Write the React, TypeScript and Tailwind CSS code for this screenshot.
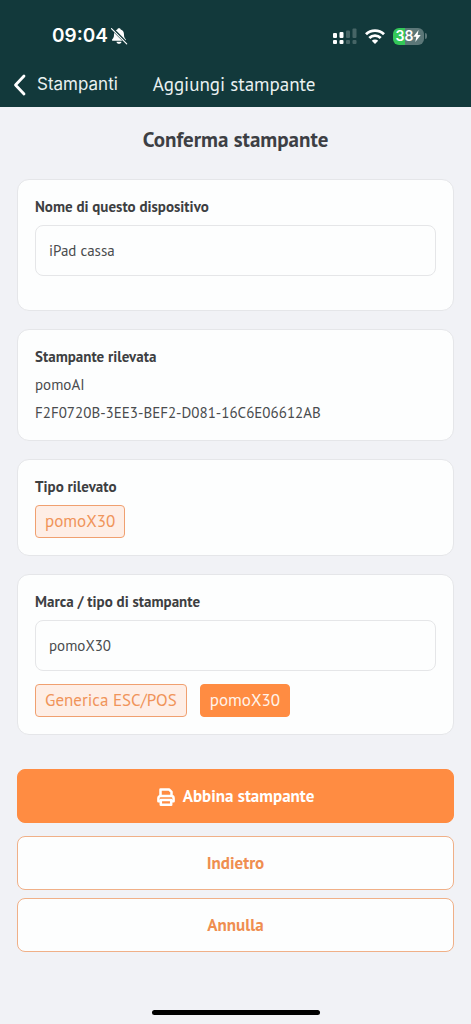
import { useState, type ReactNode } from "react";

function BellOff() {
  return (
    <svg viewBox="0 0 18 18" className="h-[18px] w-[18px]" aria-hidden="true">
      <path
        d="M9 1.2c.9 0 1.5.5 1.7 1.3 2.2.7 3.3 2.500 3.300 4.900 0 2.500.6 3.600 1.500 4.500.4.4.5.7.5 1 0 .6-.4.9-1.100.9H3.100c-.7 0-1.100-.3-1.100-.9 0-.3.100-.6.500-1C3.400 11 4 9.900 4 7.400 4 5 5.100 3.200 7.300 2.500 7.500 1.700 8.100 1.200 9 1.200Z"
        fill="#fff"
      />
      <path d="M6.500 14.700h5c-.2 1.300-1.200 2.100-2.500 2.100s-2.300-.8-2.500-2.100Z" fill="#fff" />
      <path d="M2 1.500 17 16.500" stroke="#12393b" strokeWidth="3" />
      <path d="M1.500 1.700 16.700 16.900" stroke="#fff" strokeWidth="1.200" strokeLinecap="round" />
    </svg>
  );
}

function Signal() {
  return (
    <svg viewBox="0 0 24 17" className="h-[17px] w-6" aria-hidden="true">
      <g fill="#fff">
        <rect x="0" y="5" width="4" height="5" rx="1" />
        <rect x="0" y="12" width="4" height="4" rx="1" />
        <rect x="6.500" y="4" width="4" height="6" rx="1" />
        <rect x="6.500" y="12" width="4" height="4" rx="1" />
      </g>
      <g fill="#fff" opacity="0.22">
        <rect x="13" y="2.500" width="4" height="7.500" rx="1" />
        <rect x="13" y="12" width="4" height="4" rx="1" />
        <rect x="19.500" y="0.500" width="4" height="9.500" rx="1" />
        <rect x="19.500" y="12" width="4" height="4" rx="1" />
      </g>
    </svg>
  );
}

function Wifi() {
  return (
    <svg viewBox="0 0 20 15" className="h-[15px] w-5" aria-hidden="true">
      <g fill="none" stroke="#fff" strokeWidth="2.800">
        <path d="M1 5.300a12.800 12.800 0 0 1 18 0" />
        <path d="M4.300 8.900a8.100 8.100 0 0 1 11.400 0" />
      </g>
      <path d="M10 14.900 6.800 11.700a4.600 4.600 0 0 1 6.400 0Z" fill="#fff" />
    </svg>
  );
}

function Battery() {
  return (
    <div className="flex items-center gap-px">
      <div className="flex h-[17px] w-[31px] items-center justify-center rounded-md bg-linear-to-r from-[#34c759] from-38% to-[#5c7778] to-38% text-sm font-semibold text-white">
        <span>38</span>
        <svg viewBox="0 0 8 12" className="h-3 w-2" aria-hidden="true">
          <path d="M5.600 0 .3 6.800h3L2.300 12l5.400-7H4.600Z" fill="#fff" />
        </svg>
      </div>
      <div className="h-1.5 w-0.5 rounded-r-full bg-[#5c7778]" />
    </div>
  );
}

function Printer() {
  return (
    <svg viewBox="0 0 18 18" className="h-[18px] w-[18px]" aria-hidden="true">
      <g fill="none" stroke="#fff" strokeWidth="2.500" strokeLinejoin="round">
        <path d="M3.500 8V1.400h8.500l2.500 2.500V8" />
        <path d="M4 13.200H1.400V10.200A2.200 2.200 0 0 1 3.600 8h10.800a2.200 2.200 0 0 1 2.200 2.200v3H14" />
        <path d="M3.800 12h10.400v4.700H3.800Z" />
      </g>
    </svg>
  );
}

function Card({ children }: { children: ReactNode }) {
  return (
    <section className="rounded-xl border border-[#e5e6e9] bg-[#fdfefe] px-[17px] pt-[13px] pb-[17px]">
      {children}
    </section>
  );
}

const heading = "block text-[15px] leading-7 font-bold text-[#3d3f42]";
const field =
  "mt-1 block h-[51px] w-full rounded-lg border border-[#e5e6e8] bg-[#fdfefe] px-[13px] text-[15px] text-[#4a4c4e] outline-none";
const chip = "flex items-center rounded border px-[9px] h-[33px] text-[17px]";
const chipSoft = "border-[#f0a070] bg-[#feeee6] text-[#f0945a]";
const chipSolid = "border-[#ff8c42] bg-[#ff8c42] text-[#fff3ea]";
const action =
  "flex h-[54px] w-full items-center justify-center gap-2 rounded-lg border pt-0.5 text-[17px] font-bold";

export default function App() {
  const [device, setDevice] = useState("iPad cassa");
  const [brand, setBrand] = useState("pomoX30");

  return (
    <div className="flex min-h-screen flex-col bg-[#f1f2f6] font-['PT_Sans','Noto_Sans',sans-serif]">
      <header className="bg-[#12393b] text-white">
        <div className="flex h-[60px] items-end justify-between pr-11 pb-3 pl-[52px] font-['Inter',sans-serif]">
          <div className="flex items-center gap-0.5">
            <span className="text-[19px] leading-6 font-semibold">09:04</span>
            <BellOff />
          </div>
          <div className="flex h-6 items-center gap-2">
            <Signal />
            <Wifi />
            <Battery />
          </div>
        </div>
        <nav className="flex h-[47px] items-center pt-0.5 pl-[13px] text-[#e9f1f1]">
          <a href="#stampanti" className="flex items-center gap-[11px] font-['Inter',sans-serif] text-[17px]">
            <svg viewBox="0 0 13 22" className="h-[22px] w-[13px]" aria-hidden="true">
              <path
                d="M11 2 2.500 11l8.500 9"
                fill="none"
                stroke="#fff"
                strokeWidth="2.800"
                strokeLinecap="round"
                strokeLinejoin="round"
              />
            </svg>
            Stampanti
          </a>
          <span className="ml-[35px] text-[19px]">Aggiungi stampante</span>
        </nav>
      </header>

      <main className="flex grow flex-col px-[17px] pt-[19px]">
        <h1 className="text-center text-[21px] leading-7 font-bold text-[#3d3f44]">Conferma stampante</h1>

        <div className="mt-[25px] flex flex-col gap-[18px]">
          <Card>
            <label htmlFor="device" className={heading}>
              Nome di questo dispositivo
            </label>
            <input
              id="device"
              className={`${field} mb-[17px]`}
              value={device}
              onChange={(e) => setDevice(e.target.value)}
            />
          </Card>

          <section className="rounded-xl border border-[#e5e6e9] bg-[#fdfefe] px-[17px] py-[13px]">
            <h2 className={heading}>Stampante rilevata</h2>
            <p className="text-[15px] leading-7 text-[#4a4c4e]">pomoAI</p>
            <p className="text-[15px] leading-7 text-[#4a4c4e]">F2F0720B-3EE3-BEF2-D081-16C6E06612AB</p>
          </section>

          <Card>
            <h2 className={heading}>Tipo rilevato</h2>
            <div className="mt-1 flex">
              <span className={`${chip} ${chipSoft}`}>pomoX30</span>
            </div>
          </Card>

          <Card>
            <label htmlFor="brand" className={heading}>
              Marca / tipo di stampante
            </label>
            <input
              id="brand"
              className={field}
              value={brand}
              onChange={(e) => setBrand(e.target.value)}
            />
            <div className="mt-[13px] flex gap-[13px]">
              {["Generica ESC/POS", "pomoX30"].map((name) => (
                <button
                  key={name}
                  type="button"
                  onClick={() => setBrand(name)}
                  className={`${chip} ${brand === name ? chipSolid : chipSoft}`}
                >
                  {name}
                </button>
              ))}
            </div>
          </Card>
        </div>

        <div className="mt-[34px] flex flex-col gap-2">
          <button type="button" className={`${action} mb-[5px] border-[#ff8c42] bg-[#ff8c42] text-white`}>
            <Printer />
            Abbina stampante
          </button>
          <button type="button" className={`${action} border-[#f0b088] bg-[#fdfefe] text-[#ef8e50]`}>
            Indietro
          </button>
          <button type="button" className={`${action} border-[#f0b088] bg-[#fdfefe] text-[#ef8e50]`}>
            Annulla
          </button>
        </div>
      </main>

      <footer className="flex justify-center pb-[9px]">
        <div className="h-[5px] w-[168px] rounded-full bg-black" />
      </footer>
    </div>
  );
}
